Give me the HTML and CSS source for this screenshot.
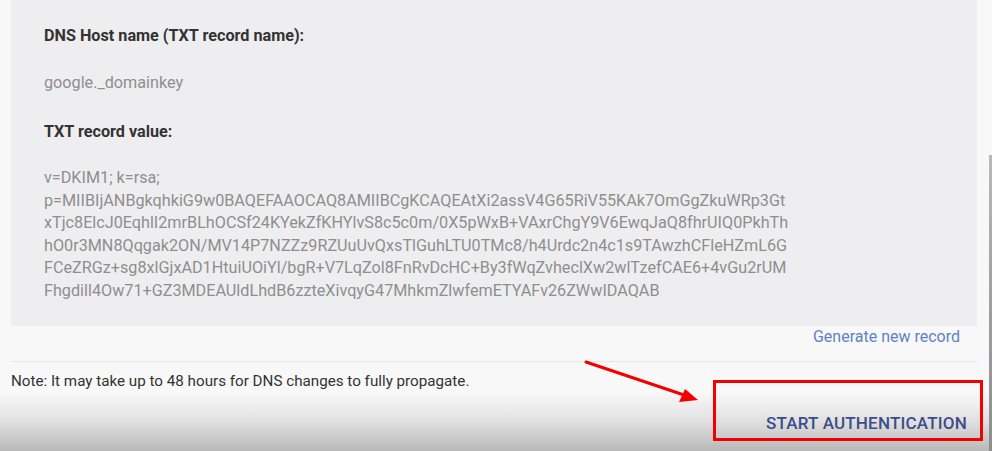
FILE: index.html
```html
<!DOCTYPE html>
<html lang="en">
<head>
    <meta charset="UTF-8">
    <title>Authenticate email</title>
    <link rel="stylesheet" href="styles.css">
</head>
<body>
<div class="page">
    <div class="panel">
        <div class="label">DNS Host name (TXT record name):</div>
        <div class="value host">google._domainkey</div>
        <div class="label">TXT record value:</div>
        <div class="value record">
            <span>v=DKIM1; k=rsa;</span>
            <span>p=MIIBIjANBgkqhkiG9w0BAQEFAAOCAQ8AMIIBCgKCAQEAtXi2assV4G65RiV55KAk7OmGgZkuWRp3Gt</span>
            <span>xTjc8ElcJ0EqhlI2mrBLhOCSf24KYekZfKHYlvS8c5c0m/0X5pWxB+VAxrChgY9V6EwqJaQ8fhrUIQ0PkhTh</span>
            <span>hO0r3MN8Qqgak2ON/MV14P7NZZz9RZUuUvQxsTlGuhLTU0TMc8/h4Urdc2n4c1s9TAwzhCFleHZmL6G</span>
            <span>FCeZRGz+sg8xlGjxAD1HtuiUOiYl/bgR+V7LqZol8FnRvDcHC+By3fWqZvheclXw2wlTzefCAE6+4vGu2rUM</span>
            <span>Fhgdill4Ow71+GZ3MDEAUldLhdB6zzteXivqyG47MhkmZlwfemETYAFv26ZWwIDAQAB</span>
        </div>
    </div>
    <div class="regen"><a href="#">Generate new record</a></div>
    <div class="sep"></div>
    <p class="note">Note: It may take up to 48 hours for DNS changes to fully propagate.</p>
    <div class="actions">
        <button class="start">START AUTHENTICATION</button>
    </div>
</div>

<!-- annotation overlay -->
<div class="mark"></div>
<svg class="arrow" width="992" height="451" viewBox="0 0 992 451">
    <line x1="586" y1="362" x2="684" y2="395" stroke="#f40000" stroke-width="3" stroke-linecap="round"/>
    <polygon points="698,400 679,402 685,389" fill="#f40000"/>
</svg>
<div class="scroll"></div>
</body>
</html>
```

FILE: styles.css
```css
* {
    margin: 0;
    padding: 0;
    box-sizing: border-box;
}

html, body {
    height: 100%;
}

body {
    overflow: hidden;
    font-family: Roboto, "Liberation Sans", Arial, sans-serif;
    font-size: 15px;
    color: #333;
    background: linear-gradient(to bottom, #f8f8f8 0, #f8f8f8 392px, #e2e2e2 420px, #b8b8b8 451px);
}

.page {
    width: 992px;
    position: relative;
}

.panel {
    margin-left: 11px;
    width: 966px;
    height: 326px;
    padding: 25px 33px 0;
    background: #eeeef0;
    font-size: 16.2px;
}

.label {
    font-weight: bold;
    line-height: 22px;
    color: #333;
}

.value {
    line-height: 22px;
    color: #8e8e8e;
}

.host {
    margin: 25px 0 27px;
}

.record {
    margin-top: 24px;
    line-height: 22.6px;
}

.record span {
    display: block;
    white-space: nowrap;
}

.regen {
    width: 977px;
    padding-right: 17px;
    text-align: right;
    line-height: 22px;
    font-size: 16px;
}

.regen a {
    color: #5f82c4;
    text-decoration: none;
}

.sep {
    margin: 13px 0 0 11px;
    width: 966px;
    height: 1px;
    background: #e6e6e7;
}

.note {
    margin: 8px 0 0 11px;
    line-height: 22px;
    font-size: 15.2px;
    color: #333;
}

.actions {
    display: flex;
    justify-content: flex-end;
    padding-right: 25px;
    margin-top: 20px;
}

.start {
    border: 0;
    background: none;
    font-family: inherit;
    font-size: 17px;
    font-weight: 500;
    letter-spacing: 0.2px;
    line-height: 22px;
    color: #3b4d8b;
    cursor: pointer;
}

.mark {
    position: absolute;
    left: 713px;
    top: 380px;
    width: 270px;
    height: 61px;
    border: 3px solid #f40000;
}

.arrow {
    position: absolute;
    left: 0;
    top: 0;
    pointer-events: none;
}

.scroll {
    position: absolute;
    left: 989px;
    top: 155px;
    width: 3px;
    height: 296px;
    background: linear-gradient(to bottom, #b9b9bd 0, #a4a4a8 40%, #8d8d90 100%);
}
```
